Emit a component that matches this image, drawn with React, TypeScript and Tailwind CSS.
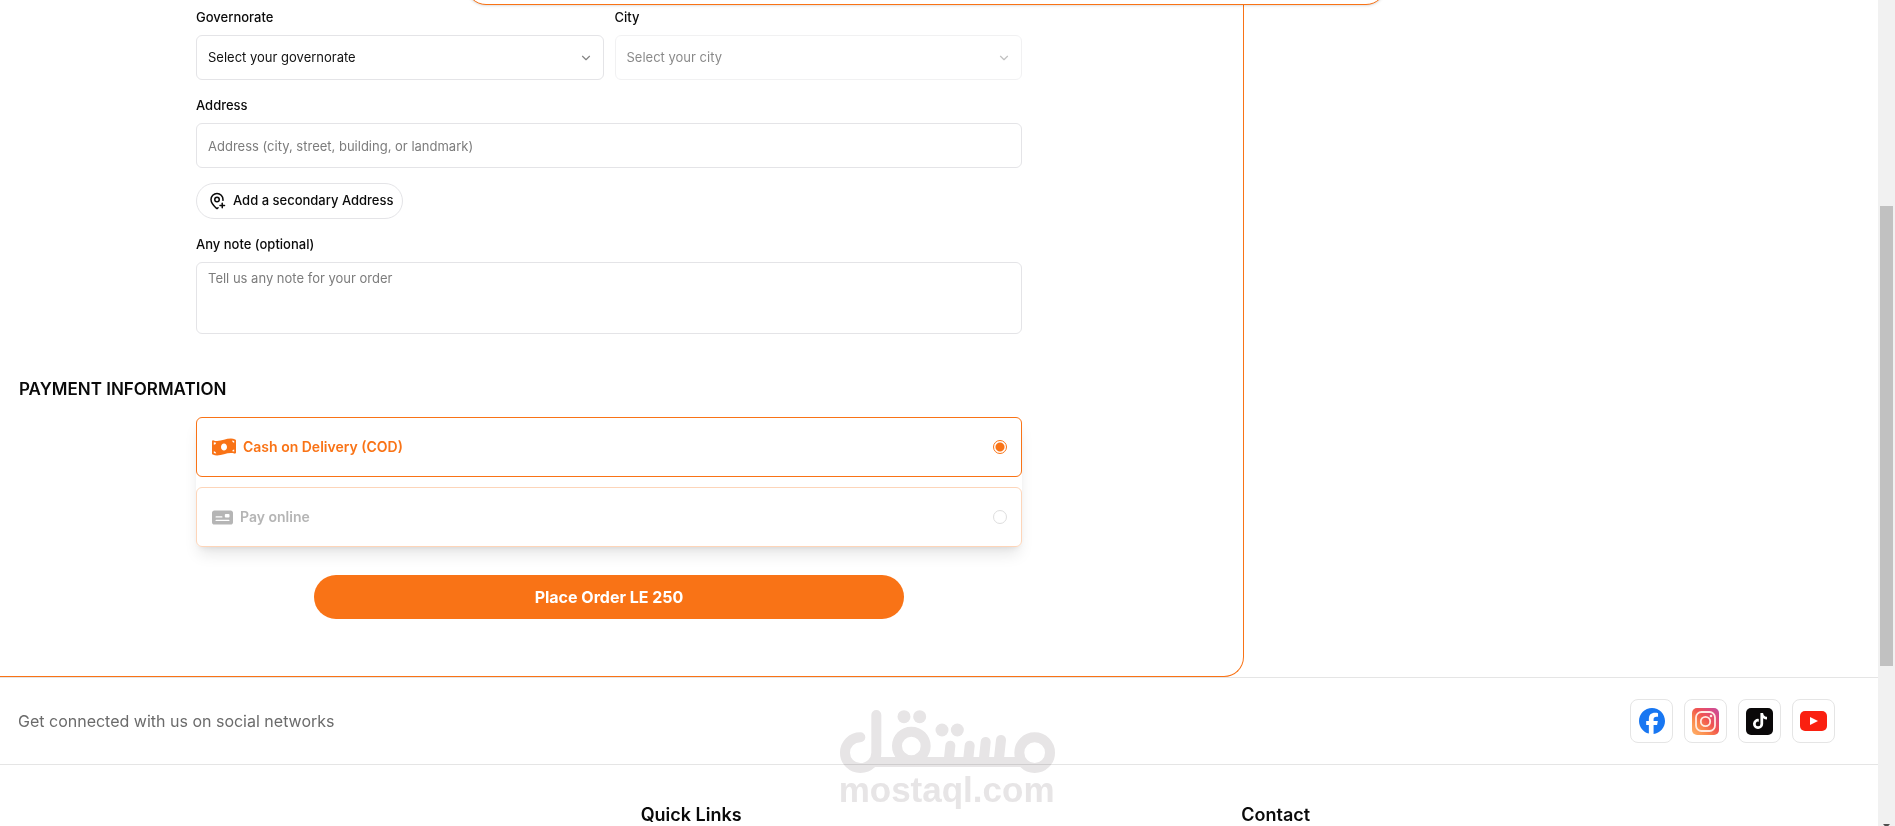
import { ChevronDown, MapPinPlus } from "lucide-react";
import { FaMoneyBillWave } from "react-icons/fa";
import { FaFacebook, FaMoneyCheck, FaTiktok } from "react-icons/fa6";
import type { ReactNode } from "react";

const fieldBase =
  "block w-full rounded-md border border-[#e4e4e7] bg-white px-[11px] text-[13px] leading-5 text-[#111111] outline-none";

function Label({ htmlFor, children }: { htmlFor: string; children: ReactNode }) {
  return (
    <label htmlFor={htmlFor} className="text-[13px] leading-4 font-medium text-[#0a0a0a]">
      {children}
    </label>
  );
}

function SelectField(props: { id: string; label: string; placeholder: string; disabled?: boolean }) {
  return (
    <div className="flex flex-col gap-2.5">
      <Label htmlFor={props.id}>{props.label}</Label>
      <div className={props.disabled ? "relative opacity-50" : "relative"}>
        <select
          id={props.id}
          disabled={props.disabled}
          className={`${fieldBase} h-[45px] appearance-none pb-0.5 disabled:opacity-100`}
        >
          <option>{props.placeholder}</option>
        </select>
        <ChevronDown
          size={14}
          className="pointer-events-none absolute top-1/2 right-[11px] -translate-y-1/2 opacity-50"
        />
      </div>
    </div>
  );
}

function PaymentOption(props: { id: string; label: string; icon: ReactNode; active?: boolean }) {
  return (
    <label
      htmlFor={props.id}
      className={
        props.active
          ? "flex h-15 items-center gap-[7px] rounded-md border border-[#f97316] bg-white pr-3.5 pl-[15px] text-[#f97316]"
          : "flex h-15 items-center gap-[7px] rounded-md border border-[#fdd5b9] bg-white pr-3.5 pl-[15px] text-[#b5b5b5]"
      }
    >
      {props.icon}
      <span className="flex-1 text-sm font-semibold">{props.label}</span>
      <input
        id={props.id}
        type="radio"
        name="payment"
        defaultChecked={props.active}
        disabled={!props.active}
        className="size-3.5 appearance-none rounded-full border border-[#dedede] checked:border-[#f97316] checked:bg-[radial-gradient(circle,#f97316_4px,transparent_5px)]"
      />
    </label>
  );
}

function InstagramLogo() {
  return (
    <svg width="27" height="27" viewBox="0 0 27 27" aria-hidden="true">
      <defs>
        <linearGradient id="ig" x1="0" y1="1" x2="1" y2="0">
          <stop offset="0" stopColor="#ffb36b" />
          <stop offset="0.3" stopColor="#fb8a4c" />
          <stop offset="0.55" stopColor="#f0554f" />
          <stop offset="0.8" stopColor="#dc4a80" />
          <stop offset="1" stopColor="#c2509f" />
        </linearGradient>
      </defs>
      <rect width="27" height="27" rx="5" fill="url(#ig)" />
      <g fill="none" stroke="#ffeae2" strokeWidth="1.8">
        <rect x="4" y="4" width="19" height="19" rx="5.5" />
        <circle cx="13.5" cy="13.5" r="4.7" />
      </g>
      <circle cx="19" cy="8" r="1.3" fill="#ffeae2" />
    </svg>
  );
}

function YoutubeLogo() {
  return (
    <svg width="27" height="20" viewBox="0 0 27 20" aria-hidden="true">
      <rect width="27" height="20" rx="5" fill="#fa2010" />
      <path d="M10 6l8 4-8 4z" fill="#fff" />
    </svg>
  );
}

function SocialLink({ label, children }: { label: string; children: ReactNode }) {
  return (
    <a
      href="#"
      aria-label={label}
      className="flex h-11 w-[43px] items-center justify-center rounded-lg border border-[#e5e5e5]"
    >
      {children}
    </a>
  );
}

function Watermark() {
  return (
    <svg
      width="224"
      height="104"
      viewBox="48 48 672 312"
      className="pointer-events-none absolute top-[706px] left-[836px] mix-blend-multiply"
      aria-hidden="true"
    >
      <g fill="none" stroke="#e7e5e6" strokeWidth="30" strokeLinecap="round">
        <path d="M121 142A46 46 0 0 0 75 188A46 46 0 0 0 121 234A48 46 0 0 0 169 188V75" />
        <path d="M165 216H602" />
        <circle cx="274" cy="168" r="43" />
        <path d="M391 167L386 214M449 167L444 214M497 156L491 214M543 150L536 214" />
        <circle cx="644" cy="188" r="46" />
      </g>
      <g fill="#e7e5e6">
        <circle cx="252" cy="80" r="19.5" />
        <circle cx="299" cy="80" r="19.5" />
        <circle cx="366" cy="120" r="19.5" />
        <circle cx="412" cy="120" r="19.5" />
        <text x="56" y="336" fontSize="105" fontWeight="700" fontFamily="'Liberation Sans', sans-serif">
          mostaql.com
        </text>
      </g>
    </svg>
  );
}

export default function App() {
  return (
    <div className="relative flex h-screen overflow-hidden bg-white font-['Inter',sans-serif] text-[#0a0a0a]">
      <div className="min-w-0 flex-1">
        <main className="w-[calc(66.6667%-8px)] rounded-br-[20px] border-r border-b border-[#f97316] pt-[9px] pr-11 pb-[57px] pl-[19px]">
          <form className="flex flex-col">
            <div className="mx-auto flex w-[70%] flex-col">
              <div className="grid grid-cols-2 gap-x-[11px]">
                <SelectField id="governorate" label="Governorate" placeholder="Select your governorate" />
                <SelectField id="city" label="City" placeholder="Select your city" disabled />
              </div>
              <div className="mt-[17px] flex flex-col gap-2.5">
                <Label htmlFor="address">Address</Label>
                <input
                  id="address"
                  placeholder="Address (city, street, building, or landmark)"
                  className={`${fieldBase} h-[45px] placeholder:text-[#7c7c7c]`}
                />
              </div>
              <button
                type="button"
                className="mt-[15px] flex h-9 items-center gap-[7px] self-start rounded-full border border-[#e4e4e7] pr-2 pl-[11px] text-[13px] font-medium"
              >
                <MapPinPlus size={18} strokeWidth={2} />
                Add a secondary Address
              </button>
              <div className="mt-[17px] flex flex-col gap-2.5">
                <Label htmlFor="note">Any note (optional)</Label>
                <textarea
                  id="note"
                  placeholder="Tell us any note for your order"
                  className={`${fieldBase} h-[72px] resize-none py-[5px] placeholder:text-[#7c7c7c]`}
                />
              </div>
            </div>
            <h2 className="mt-[43px] text-[17px] leading-6 font-semibold">PAYMENT INFORMATION</h2>
            <div className="mx-auto mt-4 flex w-[70%] flex-col gap-2.5 rounded-md bg-white shadow-lg">
              <PaymentOption id="cod" label="Cash on Delivery (COD)" icon={<FaMoneyBillWave size={24} />} active />
              <PaymentOption id="online" label="Pay online" icon={<FaMoneyCheck size={21} />} />
            </div>
            <button
              type="submit"
              className="mx-auto mt-7 h-11 w-1/2 rounded-full bg-[#f97316] text-base font-bold text-white"
            >
              Place Order LE 250
            </button>
          </form>
        </main>
        <footer>
          <div className="flex items-center justify-between border-y border-[#e5e5e5] py-[21px] pr-[43px] pl-[18px]">
            <p className="text-base text-[#6b6b6b]">Get connected with us on social networks</p>
            <div className="flex gap-[11px]">
              <SocialLink label="Facebook">
                <FaFacebook size={26} color="#1877f2" />
              </SocialLink>
              <SocialLink label="Instagram">
                <InstagramLogo />
              </SocialLink>
              <SocialLink label="TikTok">
                <span className="flex size-[27px] items-center justify-center rounded-[5px] bg-[#0a0809]">
                  <FaTiktok size={16} color="#fff" />
                </span>
              </SocialLink>
              <SocialLink label="YouTube">
                <YoutubeLogo />
              </SocialLink>
            </div>
          </div>
          <div className="grid grid-cols-3 pt-9 pr-9 pl-10">
            <h3 className="col-start-2 text-lg font-semibold">Quick Links</h3>
            <h3 className="text-lg font-semibold">Contact</h3>
          </div>
        </footer>
      </div>
      <div className="flex w-[17px] shrink-0 flex-col items-center bg-[#f1f1f1]" aria-hidden="true">
        <div className="h-[206px] shrink-0" />
        <div className="h-[460px] w-[13px] shrink-0 bg-[#c1c1c1]" />
        <svg width="7" height="4" viewBox="0 0 7 4" className="mt-[158px] shrink-0">
          <path d="M0 0h7L3.5 4z" fill="#505050" />
        </svg>
      </div>
      <div className="absolute top-[-55px] left-[466px] h-[60px] w-[920px] rounded-[20px] border border-[#f97316] bg-white shadow-sm" />
      <Watermark />
    </div>
  );
}
